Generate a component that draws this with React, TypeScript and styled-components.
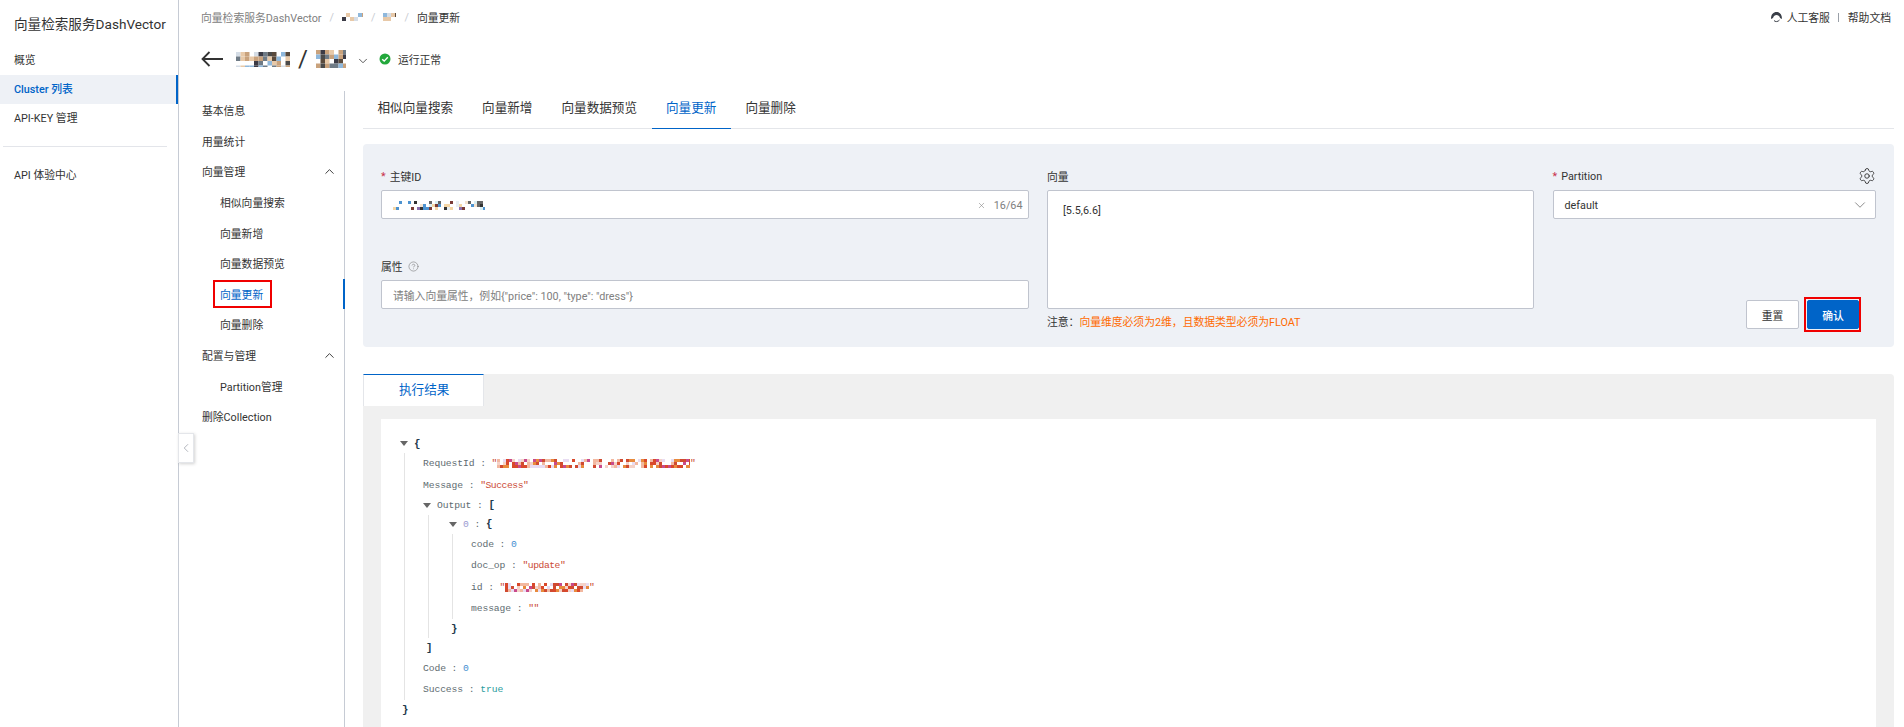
import React from "react";
import styled, { createGlobalStyle } from "styled-components";
import { ChevronDown, ChevronUp, ChevronLeft, Settings, CircleHelp, X } from "lucide-react";

const Global = createGlobalStyle`
  html, body { margin: 0; height: 100%; overflow: hidden; background: #fff; }
  * { box-sizing: border-box; }
  body { font-family: Roboto, "Noto Sans CJK SC", sans-serif; font-size: 10.8px; color: #333; }
`;

const BLUE = "#0064c8";
const RED = "#f00000";

const Page = styled.div`
  display: flex;
  height: 727px;
  width: 1904px;
  overflow: hidden;
`;

const Sidebar = styled.aside`
  width: 179px;
  flex: none;
  border-right: 1px solid #c6cbd4;
`;
const Brand = styled.div`
  height: 46px;
  padding: 15px 0 0 14px;
  font-size: 13.6px;
  line-height: 18px;
  color: #333;
  white-space: nowrap;
`;
const SideItem = styled.div<{ $active?: boolean }>`
  height: 29px;
  line-height: 29px;
  padding-left: 14px;
  font-size: 10.8px;
  color: ${(p) => (p.$active ? BLUE : "#333")};
  font-weight: ${(p) => (p.$active ? 500 : 400)};
  background: ${(p) => (p.$active ? "#eef1f6" : "transparent")};
  border-right: ${(p) => (p.$active ? `2px solid ${BLUE}` : "none")};
`;
const SideDivider = styled.div`
  height: 1px;
  background: #e3e5ea;
  margin: 13px 11px 14px 3px;
`;

const Main = styled.main`
  flex: 1;
  min-width: 0;
  display: flex;
  flex-direction: column;
  position: relative;
`;
const TopBar = styled.div`
  height: 35px;
  flex: none;
  display: flex;
  align-items: center;
  justify-content: space-between;
  padding: 0 13px 1px 22px;
  font-size: 10.8px;
`;
const Crumbs = styled.div`
  display: flex;
  align-items: center;
  color: #808080;
`;
const CrumbSep = styled.span`
  color: #c9ccd2;
  margin: 0 8px;
`;
const CrumbNow = styled.span`
  color: #333;
`;
const HelpLinks = styled.div`
  display: flex;
  align-items: center;
  color: #333;
`;
const HelpSep = styled.span`
  width: 1px;
  height: 9px;
  background: #9aa0a8;
  margin: 0 9px 0 8px;
`;
const Headset = styled.svg`
  margin-right: 4px;
`;

const TitleRow = styled.div`
  height: 56px;
  flex: none;
  display: flex;
  align-items: center;
  padding: 0 0 8px 22px;
`;
const BackArrow = styled.svg`
  margin-right: 13px;
`;
const Slash = styled.span`
  font-size: 24px;
  color: #333;
  margin: 0 8px;
  line-height: 1;
`;
const TitleChevron = styled(ChevronDown)`
  margin: 4px 9px 0 10px;
  color: #444;
`;
const StatusText = styled.span`
  margin-left: 7px;
  font-size: 10.8px;
`;

const Body = styled.div`
  flex: 1;
  min-height: 0;
  display: flex;
`;
const SubNav = styled.nav`
  width: 166px;
  flex: none;
  padding-top: 4px;
  border-right: 1px solid #c6cbd4;
  position: relative;
`;
const SubItem = styled.div<{ $child?: boolean; $active?: boolean }>`
  height: 30.6px;
  display: flex;
  align-items: center;
  justify-content: space-between;
  padding: 0 6px 0 ${(p) => (p.$child ? 41 : 23)}px;
  font-size: 10.8px;
  color: ${(p) => (p.$active ? BLUE : "#333")};
  position: relative;
  margin-right: -1px;
  border-right: 2px solid ${(p) => (p.$active ? BLUE : "transparent")};
`;
const Marked = styled.span`
  position: relative;
  &::after {
    content: "";
    position: absolute;
    left: -7px;
    right: -9px;
    top: -6px;
    bottom: -6px;
    border: 2px solid ${RED};
  }
`;
const CollapseTab = styled.div`
  position: absolute;
  left: -1px;
  top: 433px;
  width: 16px;
  height: 30px;
  background: #fff;
  border: 1px solid #e4e6ea;
  box-shadow: 1px 1px 3px rgba(0, 0, 0, 0.18);
  display: flex;
  align-items: center;
  justify-content: center;
  color: #a8acb3;
`;

const Content = styled.section`
  flex: 1;
  min-width: 0;
  padding: 0 10px 0 18px;
  display: flex;
  flex-direction: column;
`;
const Tabs = styled.div`
  height: 38px;
  flex: none;
  display: flex;
  border-bottom: 1px solid #e4e6ea;
`;
const Tab = styled.div<{ $active?: boolean }>`
  height: 38px;
  padding: 0 14.5px;
  line-height: 34px;
  font-size: 12.6px;
  white-space: nowrap;
  color: ${(p) => (p.$active ? BLUE : "#333")};
  border-bottom: ${(p) => (p.$active ? `1px solid ${BLUE}` : "none")};
`;
const FormPanel = styled.div`
  flex: none;
  margin-top: 15px;
  height: 203px;
  background: #eef1f6;
  border-radius: 4px;
  padding: 23px 18px 0;
  display: grid;
  grid-template-columns: 647.5px 487px 323.5px;
  column-gap: 18.5px;
`;
const Col = styled.div`
  display: flex;
  flex-direction: column;
  min-width: 0;
`;
const LabelRow = styled.div`
  height: 23px;
  display: flex;
  align-items: center;
  justify-content: space-between;
  font-size: 10.8px;
  padding-bottom: 5px;
`;
const LabelText = styled.span`
  display: inline-flex;
  align-items: center;
`;
const Star = styled.span`
  color: #c8324b;
  margin-right: 4px;
`;
const Hint = styled(CircleHelp)`
  margin-left: 5px;
  color: #777;
`;
const Field = styled.div<{ $muted?: boolean }>`
  height: 29px;
  background: #fff;
  border: 1px solid #c0c4ce;
  border-radius: 2px;
  display: flex;
  align-items: center;
  justify-content: space-between;
  padding: 1px 5px 0 11px;
  font-size: 10.8px;
  color: ${(p) => (p.$muted ? "#808080" : "#333")};
  margin-bottom: 38px;
`;
const FieldEnd = styled.span`
  display: inline-flex;
  align-items: center;
  gap: 8px;
  color: #808080;
`;
const TextBox = styled.div`
  height: 119px;
  background: #fff;
  border: 1px solid #c0c4ce;
  border-radius: 2px;
  padding: 13px 15px;
  font-size: 10.8px;
  line-height: 14px;
  color: #333;
`;
const Note = styled.div`
  margin-top: 7px;
  font-size: 10.8px;
  line-height: 14px;
  color: #333;
`;
const NoteWarn = styled.span`
  color: #ff6a00;
`;
const SelectChevron = styled(ChevronDown)`
  color: #808080;
  margin-right: 1px;
`;
const Actions = styled.div`
  margin-top: 43px;
  display: flex;
  justify-content: flex-end;
  gap: 8px;
  padding-right: 17px;
`;
const Button = styled.button<{ $primary?: boolean }>`
  height: 29px;
  width: ${(p) => (p.$primary ? 52 : 53)}px;
  padding: 0;
  border-radius: 2px;
  font-family: inherit;
  font-size: 10.8px;
  font-weight: ${(p) => (p.$primary ? 500 : 400)};
  color: ${(p) => (p.$primary ? "#fff" : "#333")};
  background: ${(p) => (p.$primary ? BLUE : "#fff")};
  border: 1px solid ${(p) => (p.$primary ? BLUE : "#c0c4ce")};
  position: relative;
  &::after {
    content: ${(p) => (p.$primary ? '""' : "none")};
    position: absolute;
    left: -4px;
    right: -3px;
    top: -4px;
    bottom: -4px;
    border: 2px solid ${RED};
  }
`;

const ResultPanel = styled.div`
  flex: 1;
  margin-top: 27px;
  background: #f0f0f0;
  border-radius: 4px 4px 0 0;
  display: flex;
  flex-direction: column;
  min-height: 0;
`;
const ResultTab = styled.div`
  width: 121px;
  height: 32px;
  flex: none;
  background: #fff;
  border-top: 1px solid ${BLUE};
  border-left: 1px solid #e4e6ea;
  border-right: 1px solid #e4e6ea;
  color: ${BLUE};
  font-size: 12.6px;
  line-height: 30px;
  padding-left: 35px;
`;
const JsonBox = styled.div`
  flex: 1;
  margin: 13px 18px 0;
  background: #fff;
  padding: 15px 0 0 19px;
  font-family: "Liberation Mono", monospace;
  font-size: 9.7px;
  color: #4d4d4c;
  overflow: hidden;
`;
const BraceRow = styled.div<{ $indent?: number }>`
  height: 19px;
  display: flex;
  align-items: center;
  padding-left: ${(p) => p.$indent ?? 0}px;
  white-space: pre;
`;
const LeafRow = styled.div`
  height: 21.4px;
  display: flex;
  align-items: center;
  white-space: pre;
`;
const Block = styled.div<{ $ml: number; $pl: number }>`
  margin-left: ${(p) => p.$ml}px;
  padding-left: ${(p) => p.$pl}px;
  border-left: 1px solid #e4e4e4;
`;
const Caret = styled.i`
  width: 0;
  height: 0;
  flex: none;
  border-left: 4px solid transparent;
  border-right: 4px solid transparent;
  border-top: 5px solid #666;
  margin-right: 6px;
`;
const Brace = styled.b`
  font-weight: 700;
  font-size: 10.8px;
  color: #1f3a4d;
`;
const JKey = styled.span`
  color: #5e6b70;
  letter-spacing: -0.1px;
`;
const JStr = styled.span`
  color: #cb4b36;
  display: inline-flex;
  align-items: center;
  letter-spacing: -0.45px;
`;
const JNum = styled.span`
  color: #3f8fd0;
`;
const JIdx = styled.span`
  color: #9a9ad0;
`;
const JBool = styled.span`
  color: #2a9d9d;
`;

type MosaicProps = { w: number; h: number; cell: number; seed: number; colors: string[]; density?: number };
function Mosaic({ w, h, cell, seed, colors, density = 0.7 }: MosaicProps) {
  let s = seed;
  const next = () => {
    s = (s * 16807) % 2147483647;
    return (s % 1000) / 1000;
  };
  const rects: React.ReactElement[] = [];
  for (let y = 0; y < h; y += cell) {
    for (let x = 0; x < w; x += cell) {
      const a = next();
      const b = next();
      if (a < density) {
        rects.push(<rect key={`${x}-${y}`} x={x} y={y} width={cell} height={cell} fill={colors[Math.floor(b * colors.length)]} />);
      }
    }
  }
  return (
    <svg width={w} height={h} viewBox={`0 0 ${w} ${h}`}>
      {rects}
    </svg>
  );
}

const warm = ["#e8c9a8", "#5a4a3c", "#8fb8dc", "#3b3b46", "#c9a27c", "#d5dde6", "#4a4a4a", "#6f7b86"];
const dots = ["#f5e3cf", "#7a3b36", "#4d93d0", "#f5d6a5", "#333", "#e8eef2", "#8a6fb0", "#d9eef2", "#666"];
const reds = ["#d9482b", "#e88a3c", "#f2b8a0", "#c94a8c", "#f5d2c8", "#e8dcf2", "#d04a30"];

const Line = ({ k, children }: { k: string; children: React.ReactNode }) => (
  <LeafRow>
    <JKey>{k} : </JKey>
    {children}
  </LeafRow>
);

export default function App() {
  return (
    <Page>
      <Global />
      <Sidebar>
        <Brand>向量检索服务DashVector</Brand>
        <SideItem>概览</SideItem>
        <SideItem $active>Cluster 列表</SideItem>
        <SideItem>API-KEY 管理</SideItem>
        <SideDivider />
        <SideItem>API 体验中心</SideItem>
      </Sidebar>
      <Main>
        <TopBar>
          <Crumbs>
            向量检索服务DashVector
            <CrumbSep>/</CrumbSep>
            <Mosaic w={21} h={8} cell={4} seed={11} colors={warm} />
            <CrumbSep>/</CrumbSep>
            <Mosaic w={13} h={8} cell={4} seed={29} colors={warm} />
            <CrumbSep>/</CrumbSep>
            <CrumbNow>向量更新</CrumbNow>
          </Crumbs>
          <HelpLinks>
            <Headset width="13" height="12" viewBox="0 0 13 12">
              <path d="M1 8 C1 3 3.5 1 6.5 1 C9.5 1 12 3 12 8 L10 7 C9.5 5 8 4 6.5 4 C5 4 3.5 5 3 7 Z" fill="#3a3f48" />
              <path d="M4 9.5 C5 11 8 11 9.5 9" stroke="#3a3f48" strokeWidth="1" fill="none" />
            </Headset>
            人工客服
            <HelpSep />
            帮助文档
          </HelpLinks>
        </TopBar>
        <TitleRow>
          <BackArrow width="22" height="16" viewBox="0 0 22 16">
            <path d="M22 8 H1.5 M8.5 1 L1.5 8 L8.5 15" stroke="#333" strokeWidth="1.8" fill="none" />
          </BackArrow>
          <Mosaic w={54} h={15} cell={4.5} seed={77} colors={warm} density={0.85} />
          <Slash>/</Slash>
          <Mosaic w={30} h={18} cell={4.5} seed={131} colors={warm} density={0.85} />
          <TitleChevron size={14} strokeWidth={1.5} />
          <svg width="12" height="12" viewBox="0 0 12 12">
            <circle cx="6" cy="6" r="5.5" fill="#23a83c" />
            <path d="M3.2 6.2 L5.2 8.1 L8.8 4.2" stroke="#fff" strokeWidth="1.4" fill="none" />
          </svg>
          <StatusText>运行正常</StatusText>
        </TitleRow>
        <Body>
          <SubNav>
            <SubItem>基本信息</SubItem>
            <SubItem>用量统计</SubItem>
            <SubItem>
              向量管理
              <ChevronUp size={15} strokeWidth={1.5} />
            </SubItem>
            <SubItem $child>相似向量搜索</SubItem>
            <SubItem $child>向量新增</SubItem>
            <SubItem $child>向量数据预览</SubItem>
            <SubItem $child $active>
              <Marked>向量更新</Marked>
            </SubItem>
            <SubItem $child>向量删除</SubItem>
            <SubItem>
              配置与管理
              <ChevronUp size={15} strokeWidth={1.5} />
            </SubItem>
            <SubItem $child>Partition管理</SubItem>
            <SubItem>删除Collection</SubItem>
          </SubNav>
          <Content>
            <Tabs>
              <Tab>相似向量搜索</Tab>
              <Tab>向量新增</Tab>
              <Tab>向量数据预览</Tab>
              <Tab $active>向量更新</Tab>
              <Tab>向量删除</Tab>
            </Tabs>
            <FormPanel>
              <Col>
                <LabelRow>
                  <LabelText>
                    <Star>*</Star>主键ID
                  </LabelText>
                </LabelRow>
                <Field>
                  <Mosaic w={92} h={9} cell={3} seed={53} colors={dots} density={0.4} />
                  <FieldEnd>
                    <X size={9} strokeWidth={1.5} />
                    16/64
                  </FieldEnd>
                </Field>
                <LabelRow>
                  <LabelText>
                    属性
                    <Hint size={11} strokeWidth={1.25} />
                  </LabelText>
                </LabelRow>
                <Field $muted>请输入向量属性，例如{'{"price": 100, "type": "dress"}'}</Field>
              </Col>
              <Col>
                <LabelRow>向量</LabelRow>
                <TextBox>[5.5,6.6]</TextBox>
                <Note>
                  注意：<NoteWarn>向量维度必须为2维，且数据类型必须为FLOAT</NoteWarn>
                </Note>
              </Col>
              <Col>
                <LabelRow>
                  <LabelText>
                    <Star>*</Star>Partition
                  </LabelText>
                  <Settings size={18} strokeWidth={1.2} color="#333" />
                </LabelRow>
                <Field>
                  default
                  <SelectChevron size={18} strokeWidth={1.2} />
                </Field>
                <Actions>
                  <Button>重置</Button>
                  <Button $primary>确认</Button>
                </Actions>
              </Col>
            </FormPanel>
            <ResultPanel>
              <ResultTab>执行结果</ResultTab>
              <JsonBox>
                <BraceRow>
                  <Caret />
                  <Brace>{"{"}</Brace>
                </BraceRow>
                <Block $ml={4} $pl={18}>
                  <Line k="RequestId">
                    <JStr>
                      "<Mosaic w={193} h={9} cell={3} seed={97} colors={reds} density={0.75} />"
                    </JStr>
                  </Line>
                  <Line k="Message">
                    <JStr>"Success"</JStr>
                  </Line>
                  <BraceRow>
                    <Caret />
                    <JKey>Output : </JKey>
                    <Brace>[</Brace>
                  </BraceRow>
                  <Block $ml={5} $pl={20}>
                    <BraceRow>
                      <Caret />
                      <JIdx>0</JIdx>
                      <JKey> : </JKey>
                      <Brace>{"{"}</Brace>
                    </BraceRow>
                    <Block $ml={3} $pl={18}>
                      <Line k="code">
                        <JNum>0</JNum>
                      </Line>
                      <Line k="doc_op">
                        <JStr>"update"</JStr>
                      </Line>
                      <Line k="id">
                        <JStr>
                          "<Mosaic w={84} h={9} cell={3} seed={211} colors={reds} density={0.75} />"
                        </JStr>
                      </Line>
                      <Line k="message">
                        <JStr>""</JStr>
                      </Line>
                    </Block>
                    <BraceRow $indent={2}>
                      <Brace>{"}"}</Brace>
                    </BraceRow>
                  </Block>
                  <BraceRow $indent={3}>
                    <Brace>]</Brace>
                  </BraceRow>
                  <Line k="Code">
                    <JNum>0</JNum>
                  </Line>
                  <Line k="Success">
                    <JBool>true</JBool>
                  </Line>
                </Block>
                <BraceRow $indent={2}>
                  <Brace>{"}"}</Brace>
                </BraceRow>
              </JsonBox>
            </ResultPanel>
          </Content>
        </Body>
        <CollapseTab>
          <ChevronLeft size={14} strokeWidth={1.5} />
        </CollapseTab>
      </Main>
    </Page>
  );
}
